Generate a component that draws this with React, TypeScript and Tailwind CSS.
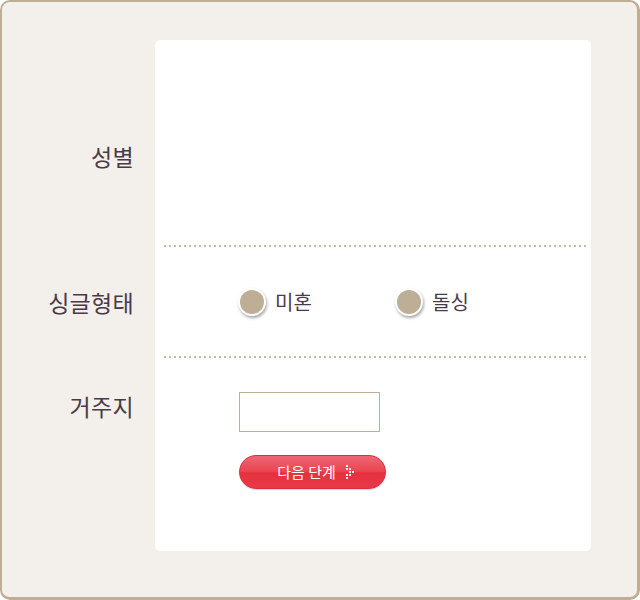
const Radio = ({ label, checked }: { label: string; checked?: boolean }) => {
  return (
    <label className="flex items-center gap-[9px] cursor-pointer">
      <span className="relative flex h-[28px] w-[28px] items-center justify-center rounded-full bg-white shadow-[1px_2px_3px_rgba(0,0,0,0.35)]">
        <span className="h-[24px] w-[24px] rounded-full bg-[#bdae95]" />
        {checked && <span className="absolute h-[10px] w-[10px] rounded-full bg-white" />}
      </span>
      <span className="text-[20px] leading-[26px] text-[#4a3a49]">{label}</span>
    </label>
  );
};

const Dots = () => (
  <div className="ml-[9px] mr-[5px] h-[2px] bg-[repeating-linear-gradient(to_right,#c6b99f_0,#c6b99f_2px,transparent_2px,transparent_5px)]" />
);

const ArrowDots = () => (
  <svg width="10" height="14" viewBox="0 0 10 14" className="fill-white/90">
    <rect x="0" y="0" width="2" height="2" />
    <rect x="3" y="3" width="2" height="2" />
    <rect x="0" y="3" width="2" height="2" />
    <rect x="6" y="6" width="2" height="2" />
    <rect x="3" y="6" width="2" height="2" />
    <rect x="0" y="9" width="2" height="2" />
    <rect x="3" y="9" width="2" height="2" />
    <rect x="0" y="12" width="2" height="2" />
  </svg>
);

export default function App() {
  return (
    <div
      className="flex h-[600px] w-[640px] rounded-[10px] border-2 border-r-[3px] border-b-[3px] border-[#bfae96] bg-[#f3efeb] pt-[38px]"
      style={{ fontFamily: '"Noto Sans CJK KR", "Noto Sans", sans-serif' }}
    >
      <div className="w-[153px] shrink-0 pr-[21px] text-right text-[23px] leading-[26px] tracking-[0.3px] text-[#4a3a49]">
        <div className="h-[206px] pt-[103px]">성별</div>
        <div className="flex h-[111px] items-center justify-end">싱글형태</div>
        <div className="pt-[36px]">거주지</div>
      </div>

      <div className="h-[511px] w-[436px] rounded-[5px] bg-white">
        <div className="h-[205px]" />
        <Dots />
        <div className="flex h-[109px] items-center pl-[83px]">
          <div className="w-[157px]">
            <Radio label="미혼" />
          </div>
          <Radio label="돌싱" />
        </div>
        <Dots />
        <div className="flex flex-col items-start pl-[84px] pt-[34px]">
          <input
            type="text"
            className="h-[40px] w-[141px] border border-[#bdae95] bg-white px-2 text-[14px] outline-none"
          />
          <button className="mt-[23px] flex h-[34px] w-[147px] items-center justify-center gap-[10px] rounded-full border border-[#d9303f] bg-[linear-gradient(#ef6675,#e9434f_50%,#e5313f_52%,#e83848)] pl-[8px] text-[15px] text-white shadow-[0_1px_1px_rgba(0,0,0,0.15)]">
            <span>다음 단계</span>
            <ArrowDots />
          </button>
        </div>
      </div>
    </div>
  );
}
